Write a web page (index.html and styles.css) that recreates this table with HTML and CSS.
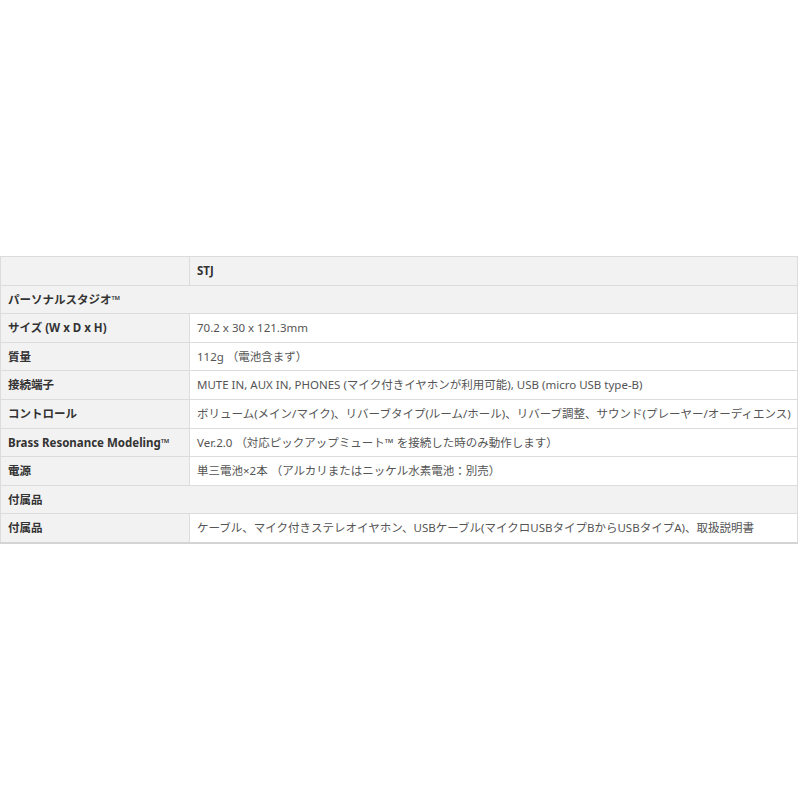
FILE: index.html
```html
<!DOCTYPE html>
<html>
<head>
    <title>STJ スペック</title>
    <link rel="stylesheet" href="styles.css">
</head>
<body>
    <div class="container">
        <table class="spec-table">
            <colgroup>
                <col class="label-col">
                <col>
            </colgroup>
            <tr class="head-row">
                <th class="label"></th>
                <th class="value">STJ</th>
            </tr>
            <tr class="section-row">
                <th colspan="2">パーソナルスタジオ™</th>
            </tr>
            <tr>
                <th class="label">サイズ (W x D x H)</th>
                <td class="value">70.2 x 30 x 121.3mm</td>
            </tr>
            <tr>
                <th class="label">質量</th>
                <td class="value">112g （電池含まず）</td>
            </tr>
            <tr>
                <th class="label">接続端子</th>
                <td class="value">MUTE IN, AUX IN, PHONES (マイク付きイヤホンが利用可能), USB (micro USB type-B)</td>
            </tr>
            <tr>
                <th class="label">コントロール</th>
                <td class="value">ボリューム(メイン/マイク)、リバーブタイプ(ルーム/ホール)、リバーブ調整、サウンド(プレーヤー/オーディエンス)</td>
            </tr>
            <tr>
                <th class="label">Brass Resonance Modeling™</th>
                <td class="value">Ver.2.0 （対応ピックアップミュート™ を接続した時のみ動作します）</td>
            </tr>
            <tr>
                <th class="label">電源</th>
                <td class="value">単三電池×2本 （アルカリまたはニッケル水素電池：別売）</td>
            </tr>
            <tr class="section-row">
                <th colspan="2">付属品</th>
            </tr>
            <tr class="last-row">
                <th class="label">付属品</th>
                <td class="value">ケーブル、マイク付きステレオイヤホン、USBケーブル(マイクロUSBタイプBからUSBタイプA)、取扱説明書</td>
            </tr>
        </table>
    </div>
</body>
</html>
```

FILE: styles.css
```css
body {
    margin: 0;
    background-color: white;
    font-family: "Noto Sans", "Noto Sans CJK JP", sans-serif;
}

.container {
    padding-top: 256px;
    width: 798px;
}

.spec-table {
    width: 100%;
    table-layout: fixed;
    border-collapse: collapse;
    font-size: 11.5px;
    color: #555;
}

.label-col {
    width: 189px;
}

.spec-table th,
.spec-table td {
    border: 1px solid #dcdcdc;
    padding: 5px 7px;
    height: 17.6px;
    line-height: 17.6px;
    text-align: left;
    white-space: nowrap;
}

.spec-table th {
    font-weight: bold;
    color: #333;
}

.label {
    background-color: #f2f2f2;
}

.value {
    background-color: white;
    font-weight: normal;
}

.head-row th {
    background-color: #f2f2f2;
}

.head-row .value {
    font-weight: bold;
}

.section-row th {
    background-color: #f2f2f2;
}

.last-row th,
.last-row td {
    border-bottom: 2px solid #d4d4d4;
}
```
